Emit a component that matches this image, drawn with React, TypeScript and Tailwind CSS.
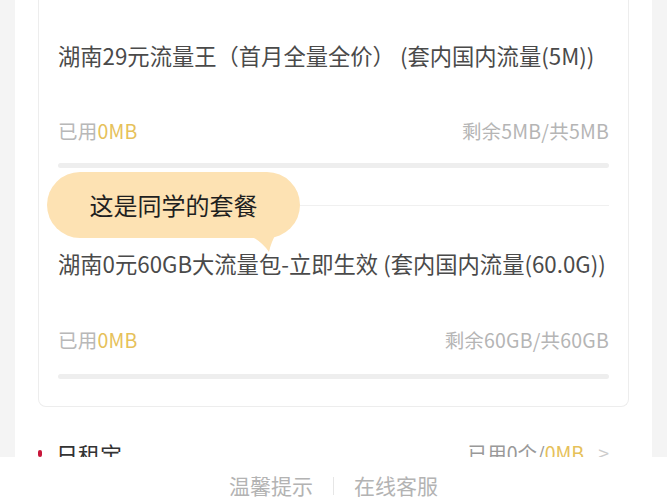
import React from 'react';

interface Plan {
  name: string;
  used: string;
  left: string;
}

const plans: Plan[] = [
  { name: '湖南29元流量王（首月全量全价） (套内国内流量(5M))', used: '0MB', left: '剩余5MB/共5MB' },
  { name: '湖南0元60GB大流量包-立即生效 (套内国内流量(60.0G))', used: '0MB', left: '剩余60GB/共60GB' },
];

function PlanItem({ plan, first }: { plan: Plan; first: boolean }) {
  return (
    <div className={first ? 'pt-[40px] pb-[37px] border-b border-[#f0f0f0]' : 'pt-[42px] pb-[27px]'}>
      <p className="text-[22.3px] leading-[30px] text-[#4a4a4a] whitespace-nowrap">{plan.name}</p>
      <div className={(first ? 'mt-[49px]' : 'mt-[50px]') + ' flex items-center justify-between text-[19.5px] leading-[24px] tracking-[0.2px]'}>
        <span className="text-[#b8b8b8]">
          已用<span className="text-[#e6c15a]">{plan.used}</span>
        </span>
        <span className="text-[#b5b5b5]">{plan.left}</span>
      </div>
      <div className={(first ? 'mt-[20px]' : 'mt-[22px]') + ' h-[5px] rounded-full bg-[#eeeeee]'} />
    </div>
  );
}

export default function App() {
  return (
    <div className="relative w-[667px] h-[500px] overflow-hidden bg-[#f4f4f4] font-['Noto_Sans_CJK_SC',sans-serif]">
      <div className="mx-[15px] h-full bg-white px-[23px]">
        {/* plan list card */}
        <div className="border-x border-b border-[#ededed] rounded-b-lg px-[19px]">
          {plans.map((p, i) => (
            <PlanItem key={i} plan={p} first={i === 0} />
          ))}
        </div>

        {/* daily pass row, cut by footer */}
        <div className="mt-[31px] flex items-center justify-between pr-[20px]">
          <div className="flex items-center gap-[14px]">
            <span className="w-[4px] h-[7px] rounded-full bg-[#c8173a]" />
            <span className="text-[22px] leading-[30px] text-[#333]">日租宝</span>
          </div>
          <div className="flex items-center gap-[14px] text-[19.5px] text-[#999]">
            <span>
              已用0个/<span className="text-[#e6c15a]">0MB</span>
            </span>
            <span className="text-[#ccc]">&gt;</span>
          </div>
        </div>
      </div>

      {/* speech bubble overlay */}
      <div className="absolute left-[47px] top-[172px]">
        <div className="w-[253px] h-[66px] rounded-full bg-[#fde2b3] flex items-center justify-center">
          <span className="text-[24px] text-[#1f1f1f]">这是同学的套餐</span>
        </div>
        <svg className="absolute left-[196px] top-[60px]" width="36" height="22" viewBox="0 0 36 22">
          <path d="M0 0 L34 0 Q28 10 26 20 Q18 8 0 0 Z" fill="#fde2b3" />
        </svg>
      </div>

      {/* footer */}
      <div className="absolute left-0 right-0 bottom-0 h-[43px] pt-[14px] bg-white flex items-center justify-center gap-[20px] text-[21px] leading-[29px] text-[#b3b3b3]">
        <span>温馨提示</span>
        <span className="w-px h-[18px] bg-[#e6e6e6]" />
        <span>在线客服</span>
      </div>
    </div>
  );
}
